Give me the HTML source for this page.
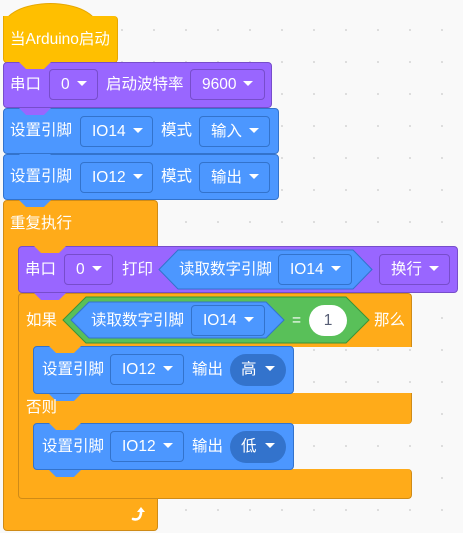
<!DOCTYPE html><html><head><meta charset="utf-8"><style>
*{margin:0;padding:0;box-sizing:border-box}
body{width:463px;height:533px;overflow:hidden;background-color:#f9f9f9;background-image:radial-gradient(circle,#d8d8d8 0.8px,transparent 1.2px);background-size:32px 32px;background-position:10px 14px;font-family:"Liberation Sans","Noto Sans CJK SC",sans-serif;font-size:15.5px;color:#fff;position:relative}
.a{position:absolute}
.b{position:absolute;border-radius:4px}
.y{background:#ffbf00;border:1px solid #e6a700}
.o{background:#ffab19;border:1px solid #cf8b17}
.p{background:#9966ff;border:1px solid #774dcb}
.u{background:#4c97ff;border:1px solid #3373cc}
.t{position:absolute;white-space:nowrap;line-height:16px}
.f{position:absolute;height:31px;border-radius:4px;line-height:29px;text-align:left;padding-left:11px;white-space:nowrap}
.fp{background:#9966ff;border:1px solid #774dcb}
.fu{background:#4c97ff;border:1px solid #3373cc}
.f i{display:inline-block;width:0;height:0;border-left:5px solid transparent;border-right:5px solid transparent;border-top:5px solid #fff;vertical-align:middle;margin-left:7px;margin-top:-2px}
.tab{position:absolute;width:32px;height:7px;clip-path:polygon(0 0,100% 0,78% 100%,22% 100%)}
.ov{position:absolute;height:32px;border-radius:16px;background:#3373cc;line-height:32px;padding-left:11px}
.ov i{display:inline-block;width:0;height:0;border-left:5px solid transparent;border-right:5px solid transparent;border-top:5px solid #fff;vertical-align:middle;margin-left:8px;margin-top:-2px}
</style></head><body>
<div class="a" style="left:3px;top:3px;width:95px;height:40px;background:#ffbf00;border-radius:50% 50% 0 0/60% 60% 0 0;border:1px solid #e6a700;border-bottom:none"></div>
<div class="b y" style="left:3px;top:16px;width:115px;height:47px;border-top:none;border-radius:0 4px 4px 4px"></div>
<div class="a" style="left:4px;top:16px;width:110px;height:6px;background:#ffbf00"></div>
<div class="t" style="left:10px;top:32px">当Arduino启动</div>
<div class="b p" style="left:3px;top:62px;width:269px;height:46px"></div>
<div class="tab" style="left:19px;top:62px;background:#ffbf00"></div>
<div class="t" style="left:10px;top:77px">串口</div>
<div class="f fp" style="left:49px;top:69px;width:49px">0<i></i></div>
<div class="t" style="left:106px;top:77px">启动波特率</div>
<div class="f fp" style="left:190px;top:69px;width:75px">9600<i></i></div>
<div class="b u" style="left:3px;top:108px;width:276px;height:46px"></div>
<div class="tab" style="left:19px;top:108px;background:#9966ff"></div>
<div class="t" style="left:10px;top:123px">设置引脚</div>
<div class="f fu" style="left:80px;top:116px;width:73px">IO14<i></i></div>
<div class="t" style="left:161px;top:123px">模式</div>
<div class="f fu" style="left:199px;top:116px;width:71px">输入<i></i></div>
<div class="b u" style="left:3px;top:154px;width:276px;height:46px"></div>
<div class="tab" style="left:19px;top:154px;background:#4c97ff"></div>
<div class="t" style="left:10px;top:169px">设置引脚</div>
<div class="f fu" style="left:80px;top:162px;width:73px">IO12<i></i></div>
<div class="t" style="left:161px;top:169px">模式</div>
<div class="f fu" style="left:199px;top:162px;width:71px">输出<i></i></div>
<div class="b o" style="left:3px;top:200px;width:155px;height:331px"></div>
<div class="tab" style="left:19px;top:200px;background:#4c97ff"></div>
<div class="t" style="left:10px;top:216px">重复执行</div>
<div class="b p" style="left:18px;top:246px;width:440px;height:47px"></div>
<div class="tab" style="left:34px;top:246px;background:#ffab19"></div>
<div class="t" style="left:25px;top:262px">串口</div>
<div class="f fp" style="left:64px;top:254px;width:49px">0<i></i></div>
<div class="t" style="left:122px;top:262px">打印</div>
<svg class="a" style="left:158px;top:249px" width="216" height="41"><polygon points="1,20.5 20,1 195,1 214,20.5 195,40 20,40" fill="#4c97ff" stroke="#3373cc"/></svg>
<div class="t" style="left:179px;top:262px">读取数字引脚</div>
<div class="f fu" style="left:278px;top:254px;width:74px">IO14<i></i></div>
<div class="f fp" style="left:379px;top:254px;width:71px">换行<i></i></div>
<div class="b o" style="left:18px;top:293px;width:394px;height:54px;border-bottom:none;border-radius:4px 4px 0 0"></div>
<div class="tab" style="left:34px;top:293px;background:#9966ff"></div>
<div class="a" style="left:18px;top:346px;width:16px;height:48px;background:#ffab19;border-left:1px solid #cf8b17"></div>
<div class="b o" style="left:18px;top:393px;width:394px;height:31px;border-top:none;border-bottom:none;border-radius:0 0 4px 0"></div>
<div class="a" style="left:18px;top:423px;width:16px;height:48px;background:#ffab19;border-left:1px solid #cf8b17"></div>
<div class="b o" style="left:18px;top:469px;width:394px;height:30px;border-top:none;border-radius:0 4px 4px 4px"></div>
<div class="tab" style="left:34px;top:499px;background:#ffab19;height:6px"></div>
<div class="t" style="left:26px;top:313px">如果</div>
<svg class="a" style="left:62px;top:296px" width="308" height="48"><polygon points="1,24 24,1 284,1 307,24 284,47 24,47" fill="#59c059" stroke="#389438"/></svg>
<svg class="a" style="left:70px;top:301px" width="216" height="38"><polygon points="1,19 19,1 196,1 214,19 196,37 19,37" fill="#4c97ff" stroke="#3373cc"/></svg>
<div class="t" style="left:91px;top:313px">读取数字引脚</div>
<div class="f fu" style="left:191px;top:305px;width:74px">IO14<i></i></div>
<div class="t" style="left:292px;top:313px">=</div>
<div class="a" style="left:309px;top:305px;width:38px;height:31px;border-radius:16px;background:#fff;color:#575e75;text-align:center;line-height:31px">1</div>
<div class="t" style="left:374px;top:313px">那么</div>
<div class="b u" style="left:33px;top:346px;width:261px;height:48px"></div>
<div class="tab" style="left:49px;top:346px;background:#ffab19"></div>
<div class="tab" style="left:49px;top:394px;background:#4c97ff"></div>
<div class="t" style="left:42px;top:362px">设置引脚</div>
<div class="f fu" style="left:110px;top:354px;width:74px">IO12<i></i></div>
<div class="t" style="left:192px;top:362px">输出</div>
<div class="ov" style="left:230px;top:354px;width:56px">高<i></i></div>
<div class="t" style="left:26px;top:400px">否则</div>
<div class="b u" style="left:33px;top:423px;width:261px;height:47px"></div>
<div class="tab" style="left:49px;top:423px;background:#ffab19"></div>
<div class="tab" style="left:49px;top:470px;background:#4c97ff"></div>
<div class="t" style="left:42px;top:439px">设置引脚</div>
<div class="f fu" style="left:110px;top:431px;width:74px">IO12<i></i></div>
<div class="t" style="left:192px;top:439px">输出</div>
<div class="ov" style="left:230px;top:431px;width:56px">低<i></i></div>
<svg class="a" style="left:130px;top:505px" width="20" height="18"><path d="M3,14 Q10,16 11,8 L11,6" fill="none" stroke="#fff" stroke-width="2.6" stroke-linecap="round"/><polygon points="7,7 11,2 15,7" fill="#fff"/></svg>
</body></html>
